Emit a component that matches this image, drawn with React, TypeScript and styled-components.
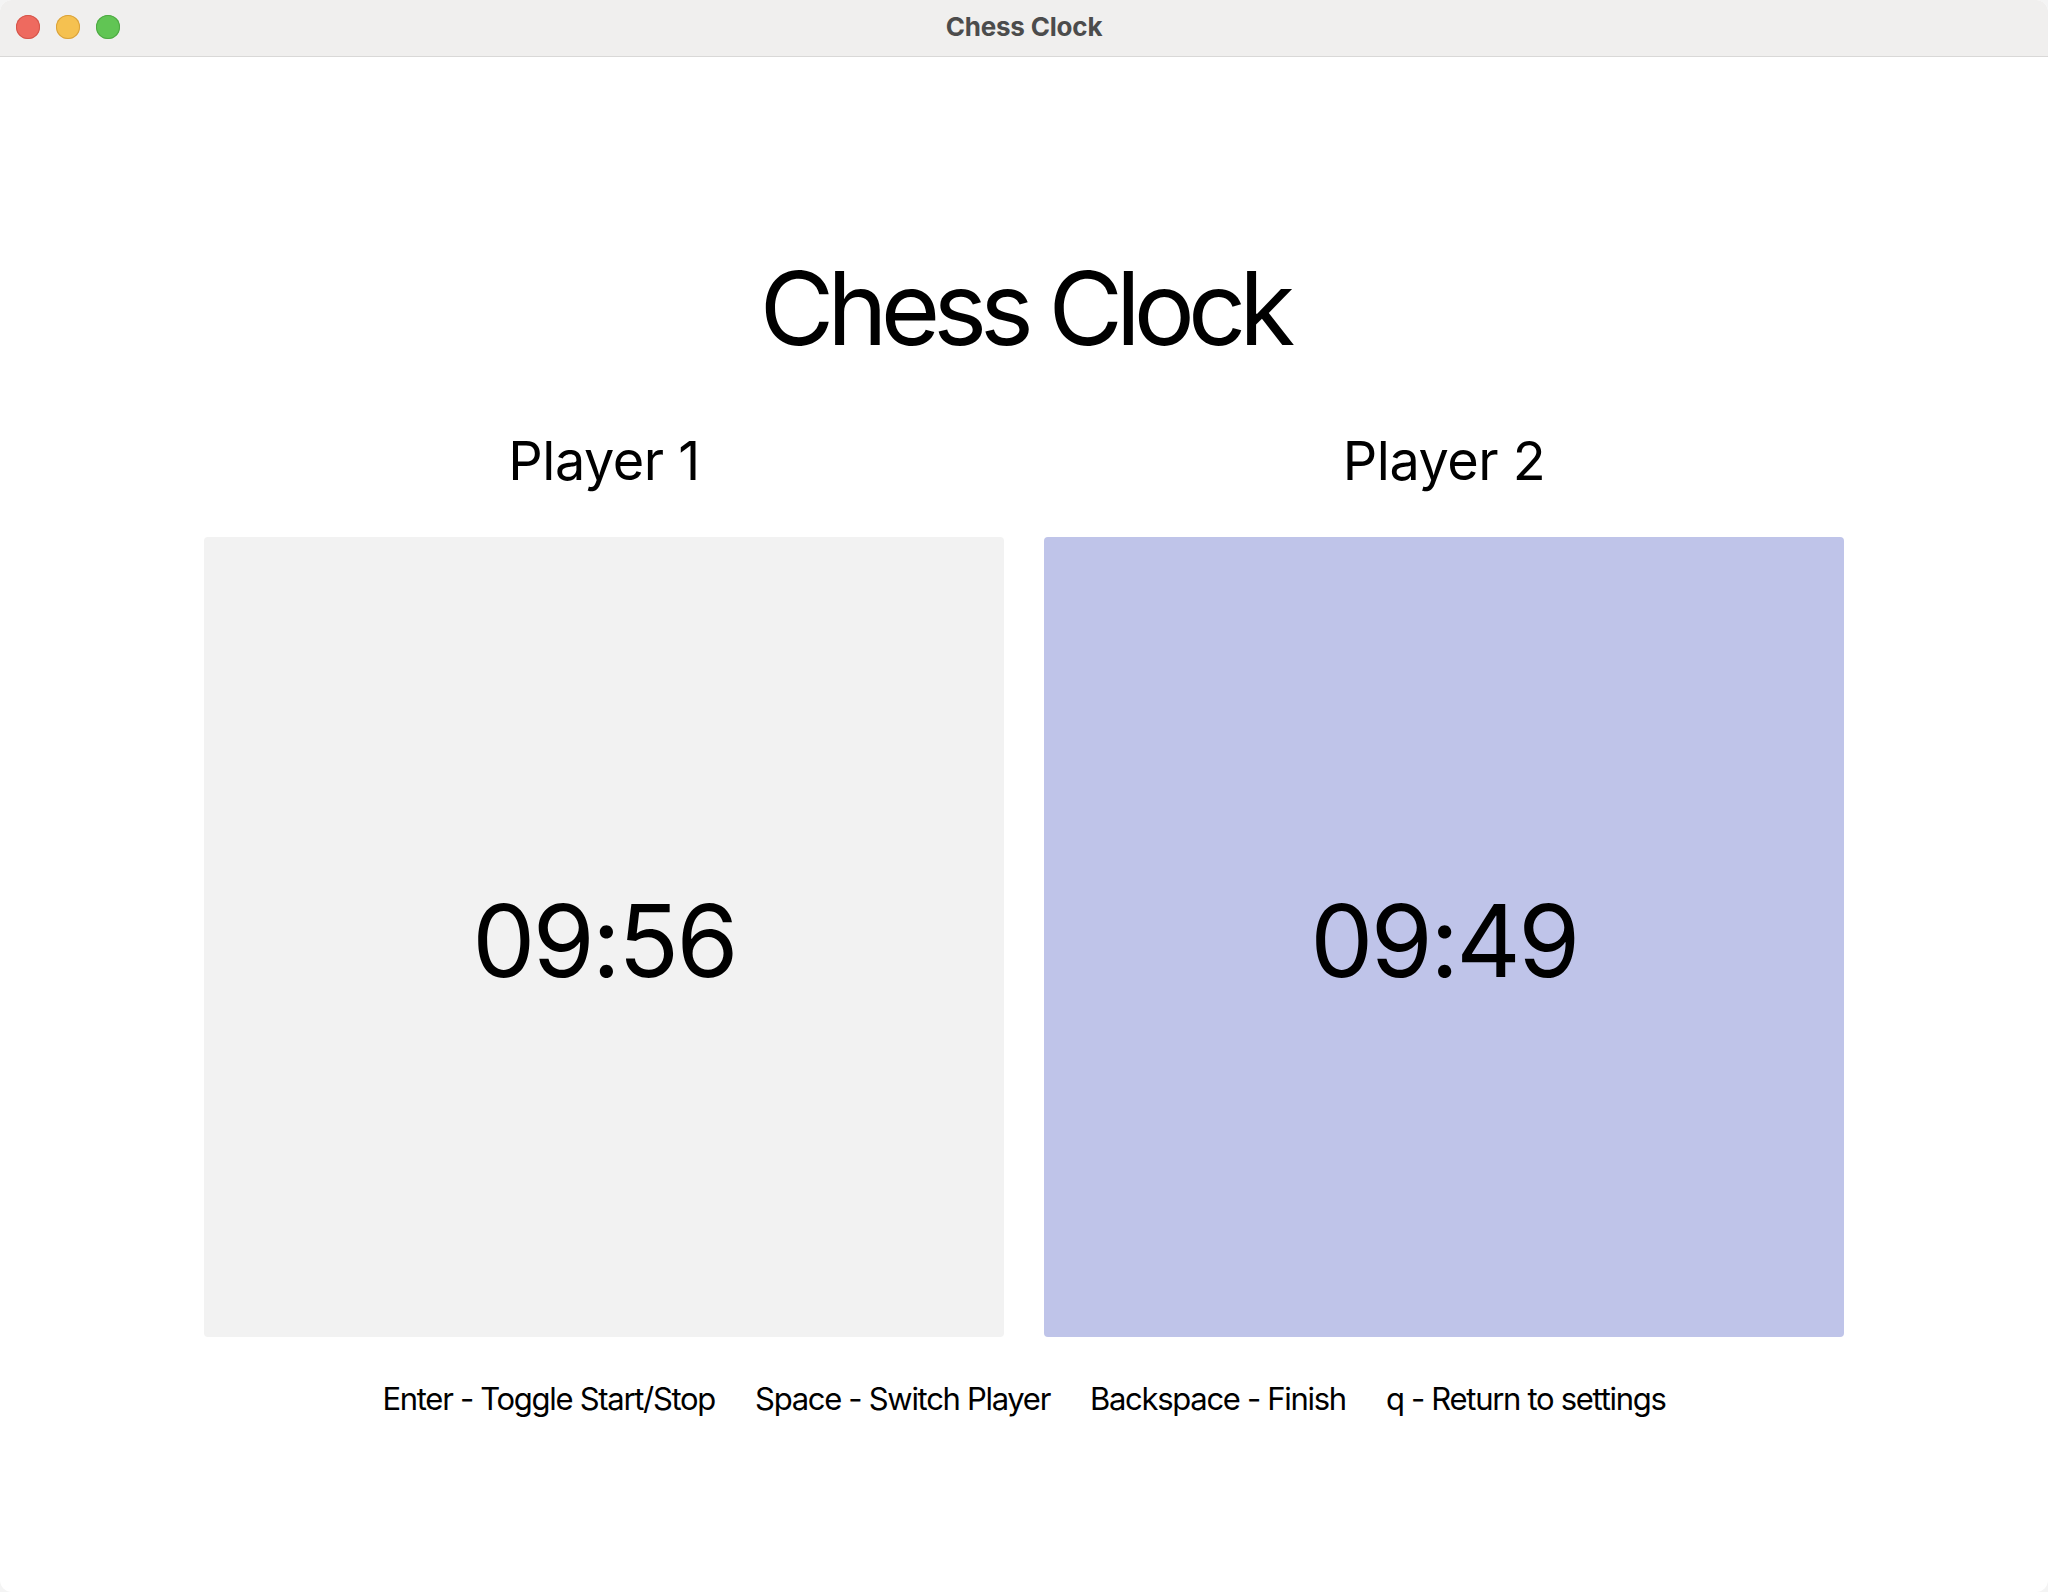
import React from "react";
import styled, { createGlobalStyle } from "styled-components";

const GlobalStyle = createGlobalStyle`
  html, body {
    margin: 0;
    padding: 0;
    background: #f4f4f4;
  }
  body {
    font-family: Inter, "Noto Sans", "Liberation Sans", sans-serif;
    color: #000;
  }
`;

const Window = styled.div`
  width: 2048px;
  height: 1592px;
  display: flex;
  flex-direction: column;
  background: #ffffff;
  border-radius: 12px;
  overflow: hidden;
`;

const TitleBar = styled.header`
  position: relative;
  height: 57px;
  flex-shrink: 0;
  display: flex;
  align-items: center;
  justify-content: center;
  padding-bottom: 4px;
  box-sizing: border-box;
  background: #f0efee;
  border-bottom: 1px solid #d9d8d7;
`;

const Lights = styled.div`
  position: absolute;
  left: 16px;
  top: 15px;
  display: flex;
  gap: 16px;
`;

const Light = styled.span<{ $color: string; $edge: string }>`
  width: 24px;
  height: 24px;
  border-radius: 50%;
  background: ${(p) => p.$color};
  box-shadow: inset 0 0 0 1px ${(p) => p.$edge};
`;

const WindowTitle = styled.span`
  font-size: 26px;
  font-weight: 700;
  color: #4c4c4c;
  letter-spacing: -0.2px;
`;

const Main = styled.main`
  display: flex;
  flex-direction: column;
  align-items: center;
  padding-top: 200px;
`;

const Heading = styled.h1`
  margin: 0;
  font-size: 102px;
  font-weight: 400;
  line-height: 1;
  letter-spacing: -7px;
`;

const Players = styled.section`
  display: grid;
  grid-template-columns: 800px 800px;
  column-gap: 40px;
  margin-top: 75px;
`;

const Player = styled.div`
  display: flex;
  flex-direction: column;
  align-items: center;
`;

const PlayerName = styled.h2`
  margin: 0;
  font-size: 54px;
  font-weight: 400;
  line-height: 1;
  letter-spacing: -0.5px;
`;

const ClockFace = styled.div<{ $active: boolean }>`
  margin-top: 49px;
  width: 800px;
  height: 800px;
  border-radius: 4px;
  display: flex;
  align-items: center;
  justify-content: center;
  background: ${(p) => (p.$active ? "#bfc4e9" : "#f2f2f2")};
`;

const Time = styled.span`
  padding-top: 8px;
  font-size: 100px;
  line-height: 1;
  letter-spacing: -2.6px;
`;

const Shortcuts = styled.footer`
  display: flex;
  gap: 40px;
  margin-top: 46px;
`;

const Shortcut = styled.span`
  font-size: 31px;
  line-height: 1;
  letter-spacing: -1.3px;
`;

const players = [
  { name: "Player 1", time: "09:56", active: false },
  { name: "Player 2", time: "09:49", active: true },
];

const keys = [
  "Enter - Toggle Start/Stop",
  "Space - Switch Player",
  "Backspace - Finish",
  "q - Return to settings",
];

export default function App() {
  return (
    <>
      <GlobalStyle />
      <Window>
        <TitleBar>
          <Lights>
            <Light $color="#ee6a5f" $edge="#d4564b" />
            <Light $color="#f5c150" $edge="#d9a23c" />
            <Light $color="#61c554" $edge="#4ea843" />
          </Lights>
          <WindowTitle>Chess Clock</WindowTitle>
        </TitleBar>
        <Main>
          <Heading>Chess Clock</Heading>
          <Players>
            {players.map((p) => (
              <Player key={p.name}>
                <PlayerName>{p.name}</PlayerName>
                <ClockFace $active={p.active}>
                  <Time>{p.time}</Time>
                </ClockFace>
              </Player>
            ))}
          </Players>
          <Shortcuts>
            {keys.map((k) => (
              <Shortcut key={k}>{k}</Shortcut>
            ))}
          </Shortcuts>
        </Main>
      </Window>
    </>
  );
}
